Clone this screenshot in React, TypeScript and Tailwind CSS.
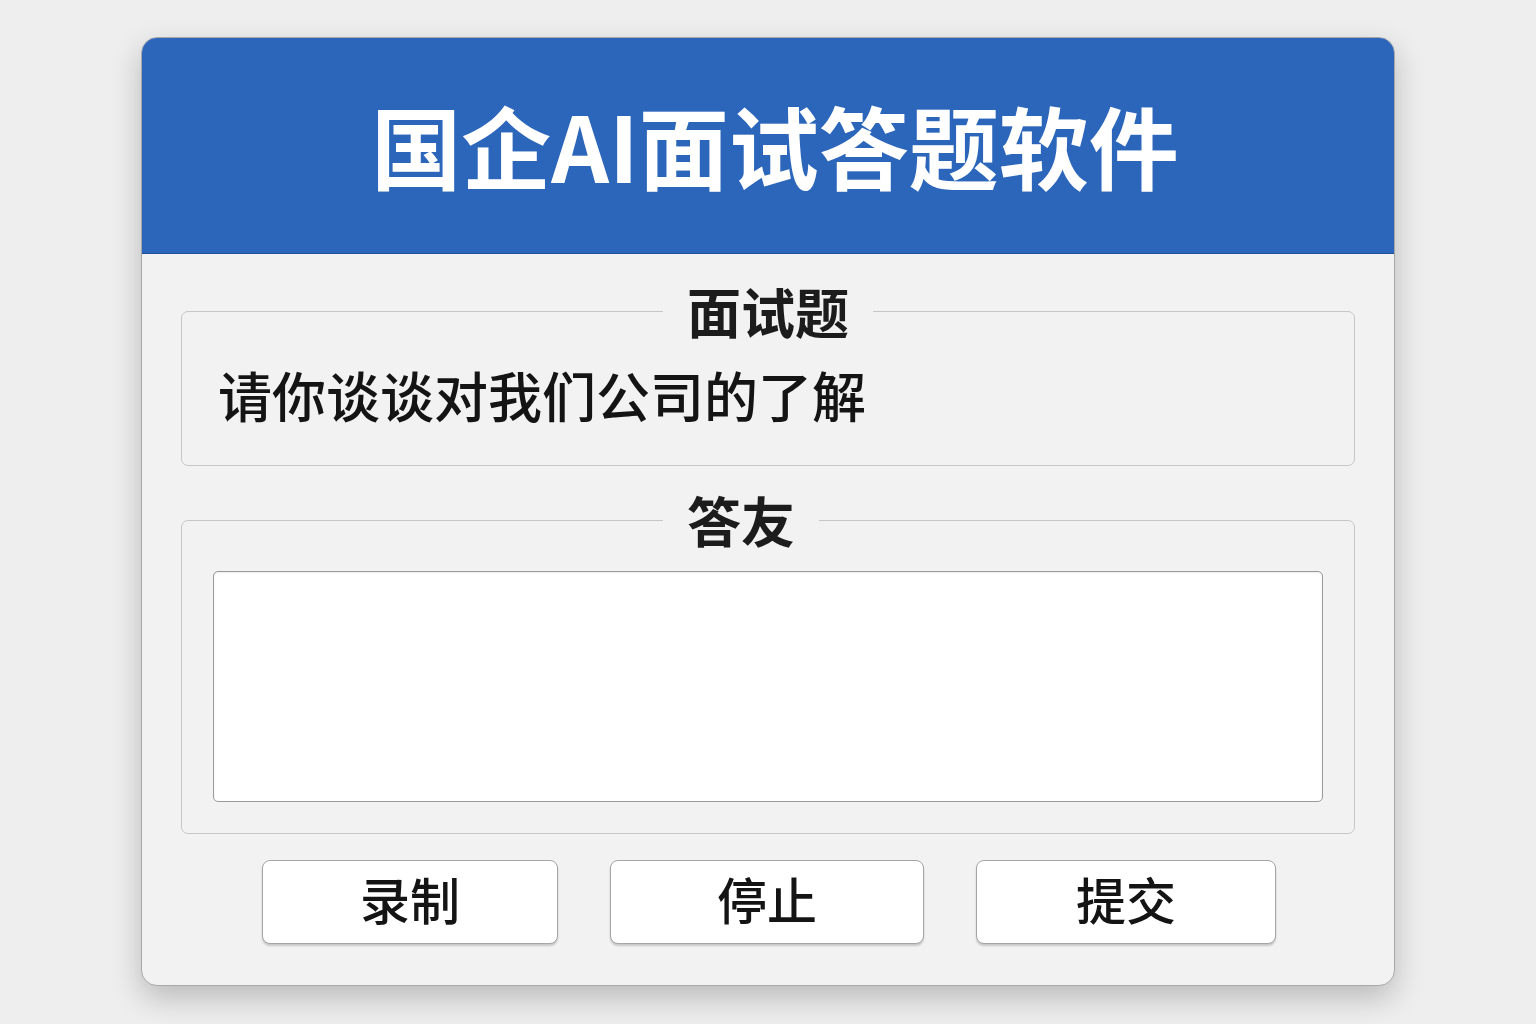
import React from "react";

const font = { fontFamily: '"Noto Sans CJK SC", "Noto Sans", sans-serif' };

type PanelProps = {
  title: string;
  children: React.ReactNode;
  className?: string;
};

const Panel = ({ title, children, className }: PanelProps) => {
  return (
    <fieldset className={`border border-[#c6c6c6] rounded-[7px] mx-[39px] ${className ?? ""}`}>
      <legend className="ml-[481px] px-[24px] text-[54px] leading-[54px] font-bold text-[#1c1c1c]">{title}</legend>
      {children}
    </fieldset>
  );
};

const buttons = [
  { label: "录制", w: "w-[296px]" },
  { label: "停止", w: "w-[314px]" },
  { label: "提交", w: "w-[300px]" },
];

const App = () => {
  return (
    <div className="w-[1536px] h-[1024px] bg-[#eeeeee] flex justify-center pt-[37px]" style={font}>
      <div className="w-[1254px] h-[949px] bg-[#f2f2f2] rounded-[16px] border border-[#a8a8a8] overflow-hidden shadow-[0_12px_30px_rgba(0,0,0,0.22)] flex flex-col">
        <div className="h-[216px] bg-[#2b66bb] border-b border-[#1f4f96] flex items-center justify-center pb-[4px] pl-[14px]">
          <h1 className="text-white text-[90px] leading-none font-bold">国企AI面试答题软件</h1>
        </div>

        <Panel title="面试题" className="mt-[30px] h-[182px]">
          <div className="px-[36px] pt-[30px] text-[54px] leading-[54px] font-medium text-[#141414]">请你谈谈对我们公司的了解</div>
        </Panel>

        <Panel title="答友" className="mt-[27px]">
          <div className="px-[31px] pt-[24px] pb-[31px]">
            <textarea className="block w-full h-[231px] bg-white border border-[#9a9a9a] rounded-[5px] resize-none outline-none shadow-[inset_0_1px_2px_rgba(0,0,0,0.08)]" />
          </div>
        </Panel>

        <div className="flex justify-center gap-[52px] mt-[26px] ml-[2px]">
          {buttons.map(b => (
            <button
              key={b.label}
              className={`${b.w} h-[84px] pb-[8px] bg-white border border-[#a5a5a5] rounded-[8px] shadow-[0_2px_2px_rgba(0,0,0,0.18)] text-[50px] leading-none font-medium text-[#141414]`}
            >
              {b.label}
            </button>
          ))}
        </div>
      </div>
    </div>
  );
};

export default App;
